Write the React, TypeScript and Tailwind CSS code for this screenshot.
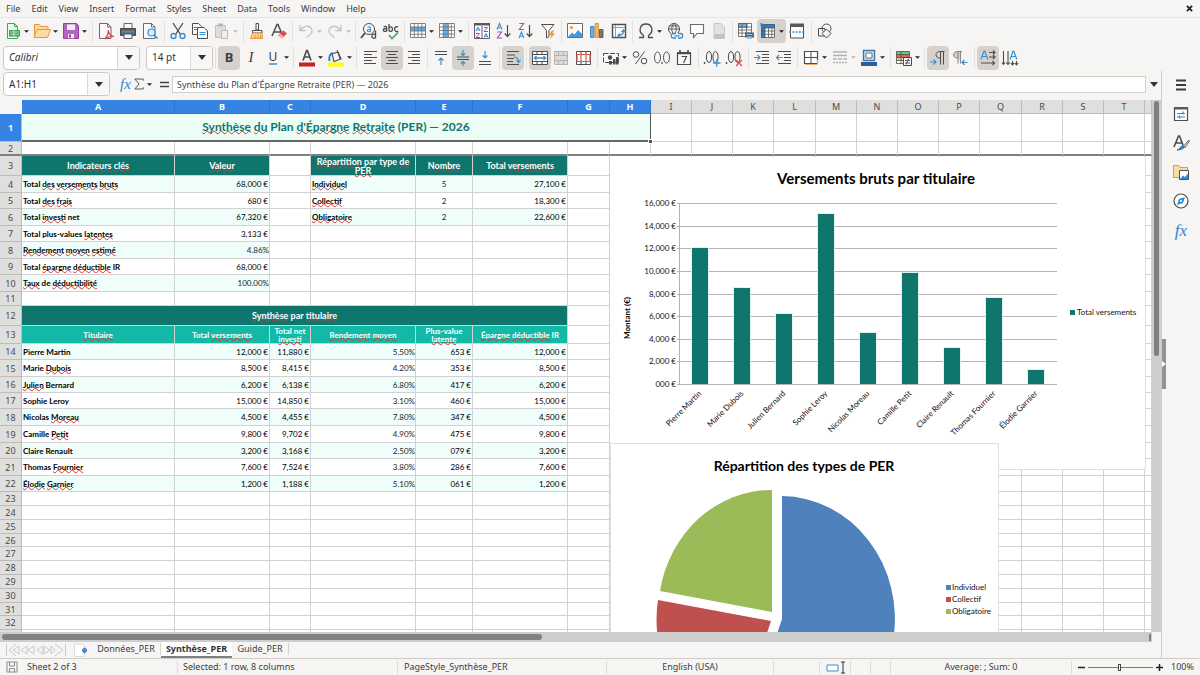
import React from 'react';

const GRAY = '#4d4d4d';
const BLUE = '#3a8fd0';

const icons: Record<string, React.ReactNode> = {
    newDoc: (
        <>
            <path d="M3.500 1.500h7l3 3v12h-10z" fill="#e9f7ec" stroke="#3fa456" />
            <path d="M10.500 1.500v3h3" fill="none" stroke="#3fa456" />
            <path d="M5 8h11v6.500H5z" fill="#3fa456" />
            <path d="M6 10h9M6 12.300h9M10 8v6" stroke="#d5f0db" strokeWidth=".8" />
        </>
    ),
    open: (
        <>
            <path d="M1.500 14V2.500h5l1.500 2h7v3" fill="#fbd79b" stroke="#e8983a" />
            <path d="M1 15.500l3-8h13.500l-3 8z" fill="#fddca4" stroke="#e8983a" />
        </>
    ),
    save: (
        <>
            <path d="M1.500 1.500h13l2 2v13h-15z" fill="#b366c6" stroke="#93409f" />
            <path d="M4.500 2h9v6.500h-9zM5.500 11.500h7v5h-7z" fill="#f6eaf8" stroke="#93409f" strokeWidth=".6" />
            <path d="M7 12.500h2v3H7z" fill="#93409f" />
        </>
    ),
    pdf: (
        <>
            <path d="M2.500 1.500h8l3.500 3.500v11.500h-11.500z" fill="#fafafa" stroke="#6b6b6b" />
            <path d="M10.500 1.500v3.500h3.500" fill="none" stroke="#6b6b6b" />
            <path d="M8 17c2.500-3 3.500-6 3.200-9 .3 3 2.300 6 5.800 6.500-3-.4-6 .4-9 2.500z" fill="none" stroke="#e0404a" strokeWidth="1.200" />
        </>
    ),
    print: (
        <>
            <path d="M5 1.500h8V7H5z" fill="#f8f8f8" stroke="#666" />
            <path d="M1.500 6.500h15v7h-15z" fill="#5d6266" stroke="#44484b" />
            <path d="M2.500 9h13v1.500h-13z" fill="#3f8fcf" />
            <path d="M5 12h8v4.500H5z" fill="#f4f4f4" stroke="#555" />
        </>
    ),
    preview: (
        <>
            <path d="M2.500 1.500h8l3.500 3.500v11.500H2.500z" fill="#fafafa" stroke="#6b6b6b" />
            <path d="M10.500 1.500v3.500h3.500" fill="none" stroke="#6b6b6b" />
            <circle cx="10.500" cy="10.500" r="3.500" fill="#dcecf8" stroke={BLUE} strokeWidth="1.200" />
            <path d="M13 13l3.500 3.500" stroke={BLUE} strokeWidth="1.600" />
        </>
    ),
    cut: (
        <>
            <path d="M4 1l7.500 11.500M14 1L6.500 12.500" stroke={GRAY} strokeWidth="1.300" />
            <circle cx="4.500" cy="14" r="2.500" fill="none" stroke={BLUE} strokeWidth="1.400" />
            <circle cx="13.500" cy="14" r="2.500" fill="none" stroke={BLUE} strokeWidth="1.400" />
        </>
    ),
    copy: (
        <>
            <path d="M1.500 1.500h6l3 3v8h-9z" fill="#fafafa" stroke={GRAY} />
            <path d="M6.500 5.500h6.500l3.500 3.500v7.500h-10z" fill="#fafafa" stroke={GRAY} />
            <path d="M3 5.500h3M3 7.500h3M8.500 10.500h6M8.500 12.500h6" stroke={BLUE} />
        </>
    ),
    paste: (
        <>
            <path d="M2.500 3.500h10v12h-10z" fill="#dedddc" stroke="#c4c3c1" />
            <path d="M5 1.500h5v3H5z" fill="#b7b6b4" />
            <path d="M8.500 8.500h6v8h-6z" fill="#f0efee" stroke="#bdbcba" />
        </>
    ),
    brush: (
        <>
            <path d="M8 1.500h2.500V8H8z" fill="none" stroke={GRAY} />
            <path d="M4.500 8.500h9.500v2.500H4.500z" fill="#fafafa" stroke={GRAY} />
            <path d="M4.500 11h9.500l.5 5.500h-12z" fill="#fbd08c" stroke="#e8983a" />
            <path d="M7 16v-3M10 16v-3M12.500 16v-3" stroke="#e8983a" />
        </>
    ),
    clear: (
        <>
            <path d="M2 14L7 2.500h1L12 12M4 10h6.500" fill="none" stroke={GRAY} strokeWidth="1.500" />
            <path d="M8 13l5.500-4.500 3.500 3L12 16.500z" fill="#e5484d" />
            <path d="M8 13l2-1.600 3.700 3.200L12 16.500z" fill="#f7a9ab" />
        </>
    ),
    undo: <path d="M3 3v5.500h5.500M3.500 8c3-4 8-5 10.500-2s1 6-4.500 9.500" fill="none" stroke="#c3c2c0" strokeWidth="1.300" />,
    redo: <path d="M15 3v5.500H9.500M14.500 8c-3-4-8-5-10.500-2s-1 6 4.500 9.500" fill="none" stroke="#c3c2c0" strokeWidth="1.300" />,
    find: (
        <>
            <circle cx="9" cy="7" r="5.500" fill="#f2f8fc" stroke={GRAY} />
            <path d="M5 11l-4 5" stroke={GRAY} strokeWidth="2" />
            <path d="M7.500 5.500c1-1 3-1 3 .7v3c-1.500 1-3.200.5-3.200-.6S9 7.300 10.500 7.300" fill="none" stroke={BLUE} strokeWidth="1.100" />
            <path d="M15.500 8.500v8M15.500 13c-.8-1.400-3.800-1.200-3.800 1.200s3 2.600 3.800 1" fill="none" stroke={GRAY} strokeWidth="1.300" />
        </>
    ),
    spell: (
        <>
            <path d="M1.700 5c1-1 3-.8 3 .6v3.400c-1.300.8-3.400.6-3.400-.9s2-1.600 3.400-1.600M7 2v7M7 5.700c.8-1.200 3.500-1.200 3.500 1.500S7.800 9.600 7 8.500M16.200 5c-1.600-1-3.600-.2-3.600 2.100s2 3 3.600 2" fill="none" stroke={GRAY} strokeWidth="1.300" />
            <path d="M7 13l3 3.500L16 10.500" fill="none" stroke="#3cae5c" strokeWidth="1.600" />
        </>
    ),
    rowIcon: (
        <>
            <path d="M1.500 1.500h15v14h-15z" fill="#fff" />
            <path d="M1 5h16v4H1z" fill="#63b0ec" />
            <path d="M1.500 1.500h15v14h-15zM1.500 5h15M1.500 9h15M1.500 12.300h15M5.300 1.500v14M9 1.500v14M12.800 1.500v14" fill="none" stroke="#6a6a6a" strokeWidth=".8" />
        </>
    ),
    colIcon: (
        <>
            <path d="M1.500 1.500h15v14h-15z" fill="#fff" />
            <path d="M5.300 1h5v15h-5z" fill="#63b0ec" />
            <path d="M1.500 1.500h15v14h-15zM1.500 5h15M1.500 8.500h15M1.500 12h15M5.300 1.500v14M10.300 1.500v14M13.300 1.500v14" fill="none" stroke="#6a6a6a" strokeWidth=".8" />
        </>
    ),
    sortDialog: (
        <>
            <path d="M1.500 2.500h15v14h-15z" fill="#fff" stroke="#6a5670" />
            <path d="M1 1h16v2.500H1z" fill="#5a5a5a" />
            <path d="M9 4v12.500" stroke="#6a5670" />
            <path d="M3 9l2-4 2 4M11 15.500l2-4 2 4M3.500 7.800h3M11.500 14.300h3" fill="none" stroke={BLUE} />
            <path d="M3 11.500h3.500l-3.500 4h4M11 5.500h3.500l-3.500 4h4" fill="none" stroke="#a64fb8" />
        </>
    ),
    sortAsc: (
        <>
            <path d="M2 7.500l2.500-6 2.500 6M2.800 5.700h3.400" fill="none" stroke={BLUE} strokeWidth="1.100" />
            <path d="M2.300 10h4.400l-4.400 6h4.700" fill="none" stroke="#a64fb8" strokeWidth="1.100" />
            <path d="M12.500 3v11.500M9.700 11.500l2.800 3 2.800-3" fill="none" stroke={GRAY} strokeWidth="1.200" />
        </>
    ),
    sortDesc: (
        <>
            <path d="M2.300 1.500h4.400l-4.400 6h4.700" fill="none" stroke="#a64fb8" strokeWidth="1.100" />
            <path d="M2 16l2.500-6 2.500 6M2.800 14.200h3.400" fill="none" stroke={BLUE} strokeWidth="1.100" />
            <path d="M12.500 3v11.500M9.700 11.500l2.800 3 2.800-3" fill="none" stroke={GRAY} strokeWidth="1.200" />
        </>
    ),
    filter: (
        <>
            <path d="M2.500 2.500h12.500l-5 6v6l-2.500 1.500v-7.500z" fill="#fafafa" stroke={GRAY} />
            <path d="M13 8.500l-3 4.500h2.500l-1.500 4 5-5.500h-2.500l1.500-3z" fill="#f0962e" />
        </>
    ),
    image: (
        <>
            <path d="M1.500 1.500h15v14h-15z" fill="#fafafa" stroke="#6b6b6b" />
            <path d="M2 15l4-4.500 2.500 2L12 8l4 4v3z" fill="#3f9ae0" />
            <circle cx="5.500" cy="5.500" r="1.600" fill="#f0a030" />
        </>
    ),
    chart: (
        <>
            <path d="M2.500 4.500h3.500v11H2.500z" fill="#63b0ec" stroke="#2b7cc0" strokeWidth=".8" />
            <path d="M7 1.500h3.500v14H7z" fill="#f8b55c" stroke="#de861f" strokeWidth=".8" />
            <path d="M11.500 7.500h3.500v8h-3.500z" fill="#777" stroke="#4d4d4d" strokeWidth=".8" />
        </>
    ),
    pivot: (
        <>
            <path d="M2.500 2.500h13v13h-13z" fill="#fff" stroke={GRAY} strokeWidth="1.400" />
            <path d="M3 5.500h12M5.500 3v12" stroke="#9a9a9a" />
            <path d="M8.500 13.500c4 0 5-2 5-5M11.500 10l2-2 2 2M10 11.500l-2 2 2 2" fill="none" stroke={BLUE} strokeWidth="1.300" />
        </>
    ),
    omega: <path d="M2 15.500h4.500v-2C1 10 2.500 2 9 2s8 8 2.500 11.500v2H16" fill="none" stroke={GRAY} strokeWidth="1.300" />,
    link: (
        <>
            <circle cx="8" cy="7" r="5.500" fill="none" stroke={GRAY} />
            <path d="M2.500 7h11M3.500 4h9M8 1.500c-3 3-3 8 0 11M8 1.500c3 3 3 8 0 11" fill="none" stroke={GRAY} strokeWidth=".9" />
            <path d="M5 11h12v6H5z" fill="#f6f5f4" />
            <path d="M10 11.500H7.500c-3 0-3 4.500 0 4.500H10M12 11.500h2.500c3 0 3 4.500 0 4.500H12M8.500 13.800h5" fill="none" stroke={BLUE} strokeWidth="1.300" />
        </>
    ),
    comment: <path d="M2.500 2.500h13v9h-6.500l-3.500 4v-4h-3z" fill="#fff" stroke="#6b6b6b" strokeWidth="1.100" />,
    headers: (
        <>
            <path d="M4 1.500h7l3.500 3.500v11.500H4z" fill="#e2e2e2" stroke="#c6c6c6" />
            <path d="M4.500 12h9.500v4H4.500z" fill="#c2c2c6" />
        </>
    ),
    printArea: (
        <>
            <path d="M1.500 1.500h13v13h-13z" fill="#fff" />
            <path d="M1 1h10v5H1z" fill="#63b0ec" />
            <path d="M1.500 1.500h13v13h-13zM1.500 5h13M1.500 8h13M1.500 11h13M5 1.500v13M9.500 1.500v13" fill="none" stroke="#565656" strokeWidth=".8" />
            <path d="M8 10.500h9v5H8z" fill="#5d6266" />
            <path d="M9.500 12h6v1H9.500zM10 14.500h5V17h-5z" fill="#8fc2ea" />
        </>
    ),
    freeze: (
        <>
            <path d="M2.500 2.500h13v13h-13z" fill="#fff" />
            <path d="M2 2h14v4H2zM2 2h4v14H2z" fill="#2f7fc4" />
            <path d="M2.500 2.500h13v13h-13zM6 2.500v13M9.500 6v10M12.800 6v10M2.500 6h13M2.500 9h13M2.500 12.300h13" fill="none" stroke="#565656" strokeWidth=".8" />
            <path d="M3 1v5M.8 3h5M1.500 1.200l3.500 3.500" stroke="#2d84cc" />
        </>
    ),
    split: (
        <>
            <path d="M2.500 2.500h13v13.500h-13z" fill="#fff" stroke={GRAY} />
            <path d="M2 1.500h14v3.500H2z" fill="#5a5a5a" />
            <path d="M1 10h16" stroke={BLUE} strokeWidth="1.300" strokeDasharray="2 1.300" />
        </>
    ),
    shapes: (
        <>
            <circle cx="10.500" cy="6.500" r="4.500" fill="none" stroke={GRAY} />
            <path d="M2.500 6.500h6.500v7.500H2.500z" fill="none" stroke={GRAY} />
            <path d="M10.500 7l4.500 4.500-4.500 4.500L6 11.500z" fill="#f6f5f4" stroke={GRAY} />
        </>
    ),
    fontColor: (
        <>
            <path d="M5 11.500l3.600-10h.8l3.600 10M6.200 8h5.600" fill="none" stroke={GRAY} strokeWidth="1.700" />
            <path d="M1 13.500h16v4H1z" fill="#c9211e" />
        </>
    ),
    highlight: (
        <>
            <path d="M5 5l6-2 3 7-7 2.500z" fill="#fafafa" stroke={GRAY} strokeWidth="1.200" />
            <path d="M10 1l3 9" stroke={GRAY} />
            <path d="M6 4c-4 1-4 4-3.500 8" fill="none" stroke="#2f7fc4" strokeWidth="2" />
            <path d="M1 13.500h16v4H1z" fill="#ffff00" />
        </>
    ),
    alignLeft: <path d="M3 2.500h13M3 5.500h8M3 8.500h13M3 11.500h8M3 14.500h12" stroke={GRAY} strokeWidth="1.100" />,
    alignCenter: <path d="M3 2.500h12M5 5.500h8M3 8.500h12M5 11.500h8M3 14.500h12" stroke={GRAY} strokeWidth="1.100" />,
    alignRight: <path d="M3 2.500h12M7 5.500h8M3 8.500h12M7 11.500h8M3 14.500h12" stroke={GRAY} strokeWidth="1.100" />,
    vTop: (
        <>
            <path d="M3 2.500h12M3 5.500h12" stroke={GRAY} strokeWidth="1.100" />
            <path d="M9 16V9M6.500 11.500L9 9l2.500 2.500" fill="none" stroke={BLUE} strokeWidth="1.200" />
        </>
    ),
    vMiddle: (
        <>
            <path d="M3 8h12M3 10.500h12" stroke={GRAY} strokeWidth="1.100" />
            <path d="M9 1v5.500M6.800 4.500L9 6.500l2.200-2M9 17v-4.500M6.800 14.500L9 12.500l2.200 2" fill="none" stroke={BLUE} strokeWidth="1.200" />
        </>
    ),
    vBottom: (
        <>
            <path d="M3 12.500h12M3 15.500h12" stroke={GRAY} strokeWidth="1.100" />
            <path d="M9 2v7M6.500 6.500L9 9l2.500-2.500" fill="none" stroke={BLUE} strokeWidth="1.200" />
        </>
    ),
    wrap: (
        <>
            <path d="M3 2.500h12M3 6h8M3 9.500h7M3 12.500h6M3 15.500h12" stroke={GRAY} strokeWidth="1.100" />
            <path d="M10 8c3 0 4.500 2 4.500 5M12.500 11l2 2.500 2-2.500" fill="none" stroke={BLUE} strokeWidth="1.200" />
        </>
    ),
    merge: (
        <>
            <path d="M1.500 2.500h15v13h-15z" fill="#fff" stroke={GRAY} />
            <path d="M1.500 5.500h15M1.500 12.500h15M6 2.500v3M11 2.500v3M6 12.500v3M11 12.500v3" stroke={GRAY} />
            <path d="M3 9h12M5.500 7L3.500 9l2 2M12.500 7l2 2-2 2" fill="none" stroke={BLUE} strokeWidth="1.300" />
        </>
    ),
    mergeOff: <path d="M1.500 2.500h13v13h-13zM1.500 6.500h13M1.500 11.500h13M5.500 2.500v4M10.500 2.500v4M5.500 11.500v4M10.500 11.500v4" fill="#dcdbda" stroke="#b5b4b2" />,
    unmerge: (
        <>
            <path d="M1.500 2.500h14v13h-14zM1.500 5.500h14M1.500 12.500h14M6 2.500v13M11 2.500v13" fill="#fff" stroke={GRAY} />
            <path d="M2 5.500h13v7H2zM6 5.500v7M11 5.500v7" fill="#fff" stroke="#d9534f" strokeWidth="1.200" />
        </>
    ),
    currency: (
        <>
            <path d="M1.500 4.500h15v9h-15z" fill="#fafafa" stroke={GRAY} strokeDasharray="5 1.500" />
            <circle cx="8" cy="8.500" r="2.200" fill={GRAY} />
            <path d="M7 12h3v3.500H7zM11 10h2.500v5.500H11zM14 8h2.500v7.500H14z" fill={GRAY} />
        </>
    ),
    percent: (
        <>
            <circle cx="5" cy="5.500" r="2.800" fill="none" stroke={GRAY} />
            <circle cx="13" cy="12" r="2.800" fill="none" stroke={GRAY} />
            <path d="M13.500 2.500L4.500 15" stroke={GRAY} />
        </>
    ),
    number: (
        <>
            <ellipse cx="4.500" cy="8.500" rx="3" ry="5.500" fill="none" stroke={GRAY} />
            <ellipse cx="13.500" cy="8.500" rx="3" ry="5.500" fill="none" stroke={GRAY} />
            <path d="M9 13v2" stroke={GRAY} strokeWidth="1.200" />
        </>
    ),
    date: (
        <>
            <path d="M2.500 3.500h13v12h-13z" fill="#fafafa" stroke={GRAY} strokeWidth="1.200" />
            <path d="M5 1v4M13 1v4M2 4.500h14" stroke={GRAY} strokeWidth="1.600" />
            <path d="M6.500 7.500h5l-3 6.500" fill="none" stroke={GRAY} strokeWidth="1.200" />
        </>
    ),
    addDecimal: (
        <>
            <path d="M1.500 13v2" stroke={GRAY} strokeWidth="1.300" />
            <ellipse cx="6" cy="8" rx="2.600" ry="5.500" fill="none" stroke={GRAY} />
            <ellipse cx="12.500" cy="8" rx="2.600" ry="5.500" fill="none" stroke={GRAY} />
            <path d="M10 14h7.500M13.800 10.200v7.500" stroke={BLUE} strokeWidth="1.300" />
        </>
    ),
    delDecimal: (
        <>
            <path d="M1.500 13v2" stroke={GRAY} strokeWidth="1.300" />
            <ellipse cx="6" cy="8" rx="2.600" ry="5.500" fill="none" stroke={GRAY} />
            <ellipse cx="12.500" cy="8" rx="2.600" ry="5.500" fill="none" stroke={GRAY} />
            <path d="M11 11l6 6M17 11l-6 6" stroke="#e5484d" strokeWidth="1.300" />
        </>
    ),
    indent: (
        <>
            <path d="M3 2.500h13M9 5.500h7M9 8.500h7M9 11.500h7M3 14.500h13" stroke={GRAY} strokeWidth="1.100" />
            <path d="M1 8.500h6M4.500 6L7 8.500 4.500 11" fill="none" stroke={BLUE} strokeWidth="1.200" />
        </>
    ),
    outdent: (
        <>
            <path d="M3 2.500h13M9 5.500h7M9 8.500h7M9 11.500h7M3 14.500h13" stroke={GRAY} strokeWidth="1.100" />
            <path d="M7.500 8.500H1.500M4 6L1.500 8.500 4 11" fill="none" stroke={BLUE} strokeWidth="1.200" />
        </>
    ),
    borders: (
        <>
            <path d="M2.500 2.500h13v12h-13z" fill="#fff" stroke={GRAY} strokeWidth="1.200" />
            <path d="M9 2.500v12M2.500 8.500h13" stroke={GRAY} />
            <path d="M3 15.500h12.500M15.500 11v4" stroke="#f0a860" />
        </>
    ),
    lineStyle: <path d="M2 3h14M2 6.500h14M2 10h4M7 10h4M12 10h4M2 13.500h2M5 13.500h2M8 13.500h2M11 13.500h2M14 13.500h2" stroke="#b3b2b0" strokeWidth="1.600" />,
    borderColor: (
        <>
            <path d="M3.500 1.500h11v10h-11z" fill="#d8e8f6" stroke="#3a76a8" strokeWidth="1.400" />
            <path d="M6 4h6v5H6z" fill="#fff" stroke={GRAY} strokeWidth=".8" />
            <path d="M1 13h16v4H1z" fill="#2a6099" />
        </>
    ),
    conditional: (
        <>
            <path d="M1.500 2.500h13v12h-13z" fill="#fff" />
            <path d="M1.500 2.500h13v3h-13z" fill="#6cc382" />
            <path d="M1.500 5.500h13v3h-13z" fill="#e8604c" />
            <path d="M1.500 8.500h6v3h-6z" fill="#f8c46c" />
            <path d="M1.500 2.500h13v12h-13zM1.500 5.500h13M1.500 8.500h13M1.500 11.500h13M6 2.500v12" fill="none" stroke={GRAY} strokeWidth=".8" />
            <path d="M8.500 8.500h8v8h-8z" fill="#fafafa" stroke={GRAY} />
            <path d="M10 11.500h5M10 14h5M14 9.500l-3 6" stroke={GRAY} strokeWidth=".9" />
        </>
    ),
    ltr: (
        <>
            <path d="M14.500 15.500V2.500M11.500 15.500V2.500H15.500M11.500 2.500C5.500 2 5.500 9.500 11.500 9" fill="#d5d2cd" stroke={GRAY} />
            <path d="M1 13h6M4.500 10.500L7 13l-2.500 2.500" fill="none" stroke={BLUE} strokeWidth="1.200" />
        </>
    ),
    rtl: (
        <>
            <path d="M9.500 14.500V2.500M7 14.500V2.500H11M7 2.500C1 2 1 9.500 7 9" fill="#cfcecb" stroke="#8a8a8a" />
            <path d="M16.500 13.500h-5.500M13.500 11L11 13.500l2.500 2.500" fill="none" stroke={BLUE} strokeWidth="1.200" />
        </>
    ),
    textH: (
        <>
            <path d="M2 10.500L5 2h.8l3 8.500M3 7.500h5" fill="none" stroke={BLUE} strokeWidth="1.200" />
            <path d="M10 3.500h6M10 8h6M2 14h13.500M14 1.500l2 2-2 2M14 6l2 2-2 2M13.500 12l2 2-2 2" fill="none" stroke={GRAY} strokeWidth="1.100" />
        </>
    ),
    textV: (
        <>
            <path d="M9 10.500L12 2h.8l3 8.500M10 7.500h5" fill="none" stroke={BLUE} strokeWidth="1.200" />
            <path d="M2.500 2v13.500M7 2v13.500M11.500 12v4M15.500 12v4M.8 13.500l1.700 2 1.700-2M5.300 13.500l1.700 2 1.700-2M9.800 14l1.700 2 1.700-2M13.800 14l1.700 2 1.700-2" fill="none" stroke={GRAY} strokeWidth="1.100" />
        </>
    ),
    settings: <path d="M4 4.500h10M4 9h10M4 13.500h10" stroke="#3a3a3a" strokeWidth="2" />,
    properties: (
        <>
            <path d="M2.500 2.500h13v13h-13z" fill="#fff" stroke={GRAY} strokeWidth="1.200" />
            <path d="M2 2h14v2.500H2z" fill="#5a5a5a" />
            <path d="M5 8.500h8M5 12h8M11 6.500v3M7.500 10.500v3" stroke="#3388cc" strokeWidth="1.200" />
        </>
    ),
    stylesIcon: (
        <>
            <path d="M2 13L6.500 2h1L11 11M4 9h6" fill="none" stroke={GRAY} strokeWidth="1.600" />
            <path d="M17 6l-5.500 6 1.500 1.500 4-6z" fill="#fafafa" stroke={GRAY} strokeWidth=".9" />
            <path d="M5 16c3 0 3-4 6-4.500 2 1 2 4-6 4.500z" fill="#2d8fdc" stroke="#1f6fb4" />
        </>
    ),
    gallery: (
        <>
            <path d="M1.500 14.500v-12h5l1.500 2h7.500v10z" fill="#fddca4" stroke="#e8983a" />
            <path d="M7.500 7.500h9v9h-9z" fill="#fff" stroke={GRAY} />
            <path d="M8 16l3-3.500 2 1.500 3-3.500V16z" fill="#2d8fdc" />
        </>
    ),
    navigator: (
        <>
            <circle cx="9" cy="9" r="7" fill="#fff" stroke={GRAY} strokeWidth="1.200" />
            <path d="M13 5l-2 6-6 2 2-6z" fill="#2d8fdc" />
            <circle cx="9" cy="9" r="1" fill="#fff" />
        </>
    ),
};

const Icon: React.FC<{ name: string }> = ({ name }) => (
    <svg viewBox="0 0 18 18" className="size-[18px] shrink-0" aria-hidden="true">
        {icons[name]}
    </svg>
);

const Caret: React.FC<{ color?: string }> = ({ color = '#222' }) => (
    <svg viewBox="0 0 8 4" className="w-[5px] h-[3px] shrink-0" aria-hidden="true">
        <path d="M0 0h8L4 4z" fill={color} />
    </svg>
);

const WideCaret = () => (
    <svg viewBox="0 0 8 5" className="w-[8px] h-[5px] shrink-0" aria-hidden="true">
        <path d="M0 0h8L4 5z" fill="#333" />
    </svg>
);

interface ToolProps {
    label: string;
    icon?: string;
    menu?: boolean;
    on?: boolean;
    off?: boolean;
    children?: React.ReactNode;
}

const Tool: React.FC<ToolProps> = ({ label, icon, menu, on, off, children }) => (
    <button
        type="button"
        aria-label={label}
        disabled={off}
        className={`h-[24px] rounded-sm flex items-center shrink-0 ${menu ? 'w-[29px]' : 'w-[22px]'} ${on ? 'bg-[#d5d2cd]' : ''}`}
    >
        <span className="w-[22px] shrink-0 flex justify-center">{icon ? <Icon name={icon} /> : children}</span>
        {menu && <Caret color={off ? '#bbb' : '#222'} />}
    </button>
);

const Sep: React.FC<{ tight?: boolean }> = ({ tight }) => (
    <span className={`flex justify-center shrink-0 ${tight ? 'w-[5px]' : 'w-[6px]'}`}>
        <span className="w-px h-[22px] bg-[#e3e2e0]" />
    </span>
);

const Combo: React.FC<{ label: string; value: string; inputClass: string }> = ({ label, value, inputClass }) => (
    <div className="h-[24px] flex shrink-0 rounded border border-[#cdc7c2] overflow-hidden bg-white">
        <input aria-label={label} defaultValue={value} className={`px-[5px] text-[#2e3436] outline-none ${inputClass}`} />
        <button type="button" aria-label={`${label} list`} className="w-[22px] border-l border-[#dcd9d5] bg-[#f8f7f6] flex items-center justify-center">
            <WideCaret />
        </button>
    </div>
);

// Words between ~ marks get the red spell-check wave
const Spelled: React.FC<{ text: string }> = ({ text }) => (
    <>
        {text.split('~').map((part, i) =>
            i % 2 ? (
                <span key={i} className="underline decoration-wavy decoration-[#e0302a] decoration-1 underline-offset-[-1px] [text-decoration-skip-ink:none]">{part}</span>
            ) : (
                <React.Fragment key={i}>{part}</React.Fragment>
            )
        )}
    </>
);

const columns: [string, string][] = [
    ['A', 'w-[153px]'], ['B', 'w-[95px]'], ['C', 'w-[41px]'], ['D', 'w-[105px]'], ['E', 'w-[57px]'],
    ['F', 'w-[95px]'], ['G', 'w-[42px]'], ['H', 'w-[41px]'], ['I', 'w-[41px]'], ['J', 'w-[41px]'],
    ['K', 'w-[41px]'], ['L', 'w-[42px]'], ['M', 'w-[41px]'], ['N', 'w-[41px]'], ['O', 'w-[41px]'],
    ['P', 'w-[41px]'], ['Q', 'w-[42px]'], ['R', 'w-[41px]'], ['S', 'w-[41px]'], ['T', 'w-[41px]'], ['', ''],
];

type Kind = 'title' | 'head' | 'sub' | 'label' | 'money' | 'percent' | 'count';

interface CellData {
    text: string;
    kind: Kind;
    span?: number;
    tint?: boolean;
}

interface RowData {
    h: string;
    cells: (CellData | null)[];
}

const kindClass: Record<Kind, string> = {
    title: 'bg-[#ecfdf5] text-[#0f766e] font-bold text-[12px] text-center border-r-[#555] border-b-[#666]',
    head: 'bg-[#0f766e] text-white font-bold text-[9px] leading-[9px] text-center border-[#d0d0d0]',
    sub: 'bg-[#14b8a6] text-white font-bold text-[8px] leading-[8px] text-center border-[#8fdbd1]',
    label: 'text-black font-bold text-[8px] leading-[12px] pl-px',
    money: 'text-black text-[8px] leading-[12px] text-right pr-px',
    percent: 'text-[#222] text-[8px] leading-[12px] text-right',
    count: 'text-[#222] text-[8px] leading-[12px] text-center',
};

const cell = (kind: Kind, text: string, tint = false, span = 1): CellData => ({ kind, text, tint, span });

const summary = [
    ['Total ~des~ ~versements~ ~bruts~', '68,000 €'],
    ['Total ~des~ ~frais~', '680 €'],
    ['Total ~investi~ net', '67,320 €'],
    ['Total plus-values ~latentes~', '3,133 €'],
    ['~Rendement~ ~moyen~ ~estimé~', '4.86%'],
    ['Total ~épargne~ ~déductible~ IR', '68,000 €'],
    ['~Taux~ de ~déductibilité~', '100.00%'],
];

const types = [
    ['~Individuel~', '5', '27,100 €'],
    ['~Collectif~', '2', '18,300 €'],
    ['~Obligatoire~', '2', '22,600 €'],
];

const holders = [
    ['Pierre Martin', '12,000 €', '11,880 €', '5.50%', '653 €', '12,000 €'],
    ['Marie ~Dubois~', '8,500 €', '8,415 €', '4.20%', '353 €', '8,500 €'],
    ['~Julien~ Bernard', '6,200 €', '6,138 €', '6.80%', '417 €', '6,200 €'],
    ['Sophie Leroy', '15,000 €', '14,850 €', '3.10%', '460 €', '15,000 €'],
    ['Nicolas ~Moreau~', '4,500 €', '4,455 €', '7.80%', '347 €', '4,500 €'],
    ['Camille ~Petit~', '9,800 €', '9,702 €', '4.90%', '475 €', '9,800 €'],
    ['Claire Renault', '3,200 €', '3,168 €', '2.50%', '079 €', '3,200 €'],
    ['Thomas ~Fournier~', '7,600 €', '7,524 €', '3.80%', '286 €', '7,600 €'],
    ['~Élodie~ ~Garnier~', '1,200 €', '1,188 €', '5.10%', '061 €', '1,200 €'],
];

const kindOf = (value: string): Kind => (value.endsWith('%') ? 'percent' : 'money');

const summaryHeights = ['h-[17px]', 'h-[16px]', 'h-[17px]', 'h-[16px]', 'h-[17px]', 'h-[16px]', 'h-[17px]'];
const holderHeights = ['h-[16px]', 'h-[17px]', 'h-[16px]', 'h-[16px]', 'h-[17px]', 'h-[17px]', 'h-[16px]', 'h-[17px]', 'h-[16px]'];
const emptyHeights = ['h-[14px]', 'h-[14px]', 'h-[14px]', 'h-[13px]', 'h-[14px]', 'h-[14px]', 'h-[14px]', 'h-[14px]', 'h-[13px]', 'h-[14px]', 'h-[14px]'];

const rows: RowData[] = [
    { h: 'h-[28px]', cells: [cell('title', "~Synthèse~ ~du~ Plan ~d'Épargne~ ~Retraite~ (PER) — 2026", false, 8)] },
    { h: 'h-[14px]', cells: [] },
    {
        h: 'h-[20px]',
        cells: [
            cell('head', '~Indicateurs~ ~clés~'), cell('head', '~Valeur~'), null,
            cell('head', '~Répartition~ par type ~de~ ~PER~'), cell('head', '~Nombre~'), cell('head', 'Total ~versements~'),
        ],
    },
    ...summary.map(([label, value], i) => {
        const tint = i % 2 === 0;
        const t = types[i];
        return {
            h: summaryHeights[i],
            cells: [
                cell('label', label, tint), cell(kindOf(value), value, tint), null,
                ...(t ? [cell('label', t[0], tint), cell('count', t[1], tint), cell('money', t[2], tint)] : []),
            ],
        };
    }),
    { h: 'h-[14px]', cells: [] },
    { h: 'h-[20px]', cells: [cell('head', '~Synthèse~ par ~titulaire~', false, 6)] },
    {
        h: 'h-[18px]',
        cells: [
            cell('sub', '~Titulaire~'), cell('sub', 'Total ~versements~'), cell('sub', 'Total net ~investi~'),
            cell('sub', '~Rendement~ ~moyen~'), cell('sub', 'Plus-value ~latente~'), cell('sub', '~Épargne~ ~déductible~ IR'),
        ],
    },
    ...holders.map((h, i) => ({
        h: holderHeights[i],
        cells: h.map((v, c) => cell(c === 0 ? 'label' : kindOf(v), v, i % 2 === 0)),
    })),
    ...emptyHeights.map(h => ({ h, cells: [] })),
];

const SheetRow: React.FC<{ row: RowData; index: number }> = ({ row, index }) => {
    const used = row.cells.reduce((n, c) => n + (c?.span ?? 1), 0);
    const all = [...row.cells, ...Array(columns.length - used).fill(null)] as (CellData | null)[];
    const bottom = index === 1 ? 'border-b-2 border-b-[#7f8080]' : 'border-b';
    return (
        <tr className={row.h}>
            <th
                scope="row"
                className={`p-0 text-[9px] leading-[11px] border-r border-[#bdbcba] ${index === 0 ? 'bg-[#3584e4] text-white font-bold' : 'bg-[#dfdfde] text-[#4a4a4a] font-normal'} ${bottom}`}
            >
                {index + 1}
            </th>
            {all.map((c, i) => (
                <td
                    key={i}
                    colSpan={c?.span ?? 1}
                    className={`p-0 border-r border-[#d2d2d2] whitespace-nowrap ${c?.kind === 'title' ? 'border-b-2' : bottom} ${c ? kindClass[c.kind] : ''} ${c?.tint ? 'bg-[#effefa]' : ''}`}
                >
                    {c && (c.kind === 'head' || c.kind === 'sub' ? (
                        <span className={`flex items-center justify-center whitespace-normal ${c.kind === 'head' ? 'h-[19px]' : 'h-[17px]'}`}>
                            <span><Spelled text={c.text} /></span>
                        </span>
                    ) : (
                        <Spelled text={c.text} />
                    ))}
                </td>
            ))}
        </tr>
    );
};

const bars: [string, number][] = [
    ['Pierre Martin', 12000], ['Marie Dubois', 8500], ['Julien Bernard', 6200], ['Sophie Leroy', 15000], ['Nicolas Moreau', 4500],
    ['Camille Petit', 9800], ['Claire Renault', 3200], ['Thomas Fournier', 7600], ['Élodie Garnier', 1200],
];

const ticks = [0, 2000, 4000, 6000, 8000, 10000, 12000, 14000, 16000];

const BarChart = () => {
    const y = (v: number) => Math.round(227 - (v / 16000) * 181);
    return (
        <svg width="535" height="312" className="font-[Lato,sans-serif]" role="img" aria-label="Versements bruts par titulaire">
            <text x="266" y="27" textAnchor="middle" className="text-[15px] font-bold">Versements bruts par titulaire</text>
            {ticks.map(t => (
                <React.Fragment key={t}>
                    <path d={`M67 ${y(t)}.5H447`} stroke="#b3b3b3" />
                    <text x="66" y={y(t) + 3} textAnchor="end" className="text-[8px]" fill="#111">
                        {t === 0 ? '000 €' : `${t / 1000},000 €`}
                    </text>
                </React.Fragment>
            ))}
            <path d="M69.500 46v181" stroke="#b3b3b3" />
            {bars.map(([name, v], i) => {
                const x = 82 + Math.round(i * 41.95);
                return (
                    <React.Fragment key={name}>
                        <rect x={x - 1} y={y(v) - 1} width="18" height={228 - y(v)} fill="#e3f1ef" />
                        <rect x={x} y={y(v)} width="16" height={227 - y(v)} fill="#0f766e" />
                        <text transform={`translate(${x + 10} 237) rotate(-45)`} textAnchor="end" className="text-[8px]" fill="#111">{name}</text>
                    </React.Fragment>
                );
            })}
            <text transform="translate(20 161) rotate(-90)" textAnchor="middle" className="text-[8px] font-bold">Montant (€)</text>
            <rect x="460" y="153" width="5" height="5" fill="#0f766e" />
            <text x="467" y="158" className="text-[8px]" fill="#111">Total versements</text>
        </svg>
    );
};

const pieLegend = [
    ['Individuel', '#4f81bd'],
    ['Collectif', '#c0504d'],
    ['Obligatoire', '#9bbb59'],
];

const PieChart = () => (
    <svg width="387" height="312" className="font-[Lato,sans-serif]" role="img" aria-label="Répartition des types de PER">
        <text x="193" y="27" textAnchor="middle" className="text-[14px] font-bold">Répartition des types de PER</text>
        <path d="M171 175V52A114 123 0 1 1 132 291z" fill="#4f81bd" />
        <path d="M160 177L122 291A113 122 0 0 1 47 156z" fill="#c0504d" />
        <path d="M161 168L49 147A113 122 0 0 1 161 46z" fill="#9bbb59" />
        {pieLegend.map(([name, color], i) => (
            <React.Fragment key={name}>
                <rect x="335" y={141 + i * 12} width="5" height="5" fill={color} />
                <text x="341" y={146 + i * 12} className="text-[8px]" fill="#111">{name}</text>
            </React.Fragment>
        ))}
    </svg>
);

const Sheet = () => (
    <div className="relative flex-1 min-w-0 overflow-hidden bg-white">
        <table className="w-full table-fixed border-separate border-spacing-0 font-[Lato,sans-serif]">
            <colgroup>
                <col className="w-[22px]" />
                {columns.map(([, w], i) => <col key={i} className={w} />)}
            </colgroup>
            <thead>
                <tr className="h-[14px] text-[9px] leading-[12px] font-['Noto_Sans',sans-serif]">
                    <td className="p-0 bg-[#f6f5f4]" />
                    {columns.map(([name], i) => (
                        <th
                            key={i}
                            scope="col"
                            className={`p-0 border-r border-b ${i < 8 ? 'bg-[#3584e4] text-white font-bold border-[#2f74c8]' : 'bg-[#dfdfde] text-[#4a4a4a] font-normal border-[#bdbcba]'}`}
                        >
                            {name}
                        </th>
                    ))}
                </tr>
            </thead>
            <tbody className="[&_th]:font-['Noto_Sans',sans-serif]">
                {rows.map((row, i) => <SheetRow key={i} row={row} index={i} />)}
            </tbody>
        </table>
        <div className="absolute left-[648px] top-[39px] size-[3px] bg-[#555] border border-white box-content" />
        <div className="absolute left-[610px] top-[57px] bg-white border-r border-b border-[#e0e0e0]"><BarChart /></div>
        <div className="absolute left-[610px] top-[343px] bg-white border border-[#e0e0e0]"><PieChart /></div>
    </div>
);

const menus = ['File', 'Edit', 'View', 'Insert', 'Format', 'Styles', 'Sheet', 'Data', 'Tools', 'Window', 'Help'];

const MenuBar = () => (
    <nav className="h-[17px] flex items-center gap-px pl-px">
        {menus.map(m => (
            <button key={m} type="button" className="px-[5px] h-[17px] shrink-0">{m}</button>
        ))}
        <button type="button" aria-label="Close document" className="ml-auto mr-[7px]">
            <svg viewBox="0 0 8 8" className="size-[7px]"><path d="M1 1l6 6M7 1L1 7" stroke="#222" strokeWidth="2" /></svg>
        </button>
    </nav>
);

const StandardBar = () => (
    <div className="h-[27px] flex items-center pl-[2px] border-t border-[#e6e5e3]">
        <Tool label="New" icon="newDoc" menu />
        <Tool label="Open" icon="open" menu />
        <Tool label="Save" icon="save" menu />
        <Sep />
        <Tool label="Export as PDF" icon="pdf" />
        <Tool label="Print" icon="print" />
        <Tool label="Print preview" icon="preview" />
        <Sep />
        <Tool label="Cut" icon="cut" />
        <Tool label="Copy" icon="copy" />
        <Tool label="Paste" icon="paste" menu off />
        <Sep />
        <Tool label="Clone formatting" icon="brush" />
        <Tool label="Clear formatting" icon="clear" />
        <Sep tight />
        <Tool label="Undo" icon="undo" menu off />
        <Tool label="Redo" icon="redo" menu off />
        <Sep tight />
        <Tool label="Find and replace" icon="find" />
        <Tool label="Spelling" icon="spell" />
        <Sep tight />
        <Tool label="Row" icon="rowIcon" menu />
        <Tool label="Column" icon="colIcon" menu />
        <Sep />
        <Tool label="Sort" icon="sortDialog" />
        <Tool label="Sort ascending" icon="sortAsc" />
        <Tool label="Sort descending" icon="sortDesc" />
        <Tool label="AutoFilter" icon="filter" />
        <Sep tight />
        <Tool label="Insert image" icon="image" />
        <Tool label="Insert chart" icon="chart" />
        <Tool label="Pivot table" icon="pivot" />
        <Sep tight />
        <Tool label="Special character" icon="omega" menu />
        <Tool label="Hyperlink" icon="link" />
        <Tool label="Comment" icon="comment" />
        <Tool label="Headers and footers" icon="headers" off />
        <Sep tight />
        <Tool label="Define print area" icon="printArea" />
        <Tool label="Freeze rows and columns" icon="freeze" menu on />
        <Tool label="Split window" icon="split" />
        <Sep />
        <Tool label="Show draw functions" icon="shapes" />
    </div>
);

const FormatBar = () => (
    <div className="h-[27px] flex items-center pl-[3px]">
        <Combo label="Font name" value="Calibri" inputClass="w-[113px] italic text-[10px]" />
        <span className="w-[6px]" />
        <Combo label="Font size" value="14 pt" inputClass="w-[43px] text-[10px]" />
        <Sep tight />
        <Tool label="Bold" on><span className="text-[13px] font-bold leading-none">B</span></Tool>
        <Tool label="Italic"><span className="font-['Liberation_Serif',serif] text-[15px] italic leading-none">I</span></Tool>
        <Tool label="Underline" menu>
            <span className="text-[12px] leading-[13px] border-b-2 border-[#6aa9dc]">U</span>
        </Tool>
        <Sep tight />
        <Tool label="Font color" icon="fontColor" menu />
        <Tool label="Background color" icon="highlight" menu />
        <Sep tight />
        <Tool label="Align left" icon="alignLeft" />
        <Tool label="Center horizontally" icon="alignCenter" on />
        <Tool label="Align right" icon="alignRight" />
        <Sep tight />
        <Tool label="Align top" icon="vTop" />
        <Tool label="Center vertically" icon="vMiddle" on />
        <Tool label="Align bottom" icon="vBottom" />
        <Sep />
        <Tool label="Wrap text" icon="wrap" on />
        <Sep tight />
        <Tool label="Merge and center" icon="merge" on />
        <Tool label="Merge cells" icon="mergeOff" off />
        <Tool label="Unmerge cells" icon="unmerge" />
        <Sep tight />
        <Tool label="Currency" icon="currency" menu />
        <Tool label="Percent" icon="percent" />
        <Tool label="Number" icon="number" />
        <Tool label="Date" icon="date" />
        <Sep />
        <Tool label="Add decimal place" icon="addDecimal" />
        <Tool label="Delete decimal place" icon="delDecimal" />
        <Sep />
        <Tool label="Increase indent" icon="indent" />
        <Tool label="Decrease indent" icon="outdent" />
        <Sep tight />
        <Tool label="Borders" icon="borders" menu />
        <Tool label="Border style" icon="lineStyle" menu off />
        <Tool label="Border color" icon="borderColor" menu />
        <Sep />
        <Tool label="Conditional formatting" icon="conditional" menu />
        <Sep tight />
        <Tool label="Left to right" icon="ltr" on />
        <Tool label="Right to left" icon="rtl" />
        <Sep />
        <Tool label="Text direction horizontal" icon="textH" on />
        <Tool label="Text direction vertical" icon="textV" />
    </div>
);

const FormulaBar = () => (
    <div className="h-[29px] flex items-center pl-[3px] pb-[3px]">
        <Combo label="Name box" value="A1:H1" inputClass="w-[83px] text-[10px]" />
        <span className="w-[8px]" />
        <button type="button" aria-label="Function wizard" className="w-[15px] font-['Liberation_Serif',serif] italic text-[15px] leading-none text-[#2d84cc]">fx</button>
        <button type="button" aria-label="Select function" className="w-[25px] flex items-center gap-[3px]">
            <svg viewBox="0 0 12 14" className="w-[10px] h-[12px] ml-px"><path d="M11 3V1H1l5 6-5 6h10v-2" fill="none" stroke="#555" strokeWidth="1.200" /></svg>
            <Caret />
        </button>
        <button type="button" aria-label="Formula" className="w-[13px] flex justify-center">
            <svg viewBox="0 0 9 7" className="w-[9px] h-[7px]"><path d="M0 1.500h9M0 5.500h9" stroke="#444" strokeWidth="1.400" /></svg>
        </button>
        <input
            aria-label="Input line"
            defaultValue="Synthèse du Plan d'Épargne Retraite (PER) — 2026"
            className="flex-1 min-w-0 ml-px h-[17px] px-[4px] bg-white border border-[#d5d2ce] text-[9px] text-[#444] outline-none"
        />
        <button type="button" aria-label="Expand formula bar" className="w-[15px] flex justify-center"><WideCaret /></button>
    </div>
);

const tabs = ['Données_PER', 'Synthèse_PER', 'Guide_PER'];

const TabBar = () => (
    <div className="h-[16px] flex items-stretch text-[9px] leading-[14px]">
        <svg viewBox="0 0 62 14" className="w-[62px] h-[14px] ml-[5px] mt-px shrink-0" fill="none" stroke="#cbcac8">
            <path d="M1.500 1v12M11 1L4 7l7 6M8 7l6-4v8zM16 7l6-4v8zM23 7l6-4v8zM38 3l-6 4 6 4zM39 3l6 4-6 4zM46 3l4 4-4 4zM50 1l8 6-8 6M60.500 1v12" />
        </svg>
        <button type="button" aria-label="Add sheet" className="w-[16px] ml-[5px] flex justify-center items-center">
            <svg viewBox="0 0 16 14" className="w-[16px] h-[14px]">
                <path d="M2.500 1h8l2 2v10.500h-10z" fill="#fff" stroke="#dddcda" />
                <circle cx="12.500" cy="7.500" r="1.800" fill="none" stroke="#2f6fbd" strokeWidth="1.300" />
                <path d="M12.500 4.500v6M10 7.500h5" stroke="#2f6fbd" strokeWidth=".6" />
            </svg>
        </button>
        <span className="w-[4px]" />
        {tabs.map((t, i) => (
            <button
                key={t}
                type="button"
                className={i === 1
                    ? 'w-[71px] text-center bg-white font-bold text-[#333] border-b-2 border-[#7f8080]'
                    : `text-center border-r border-[#d3d2d0] mt-px mb-[3px] leading-[12px] ${i === 0 ? 'w-[69px]' : 'w-[57px]'}`}
            >
                {t}
            </button>
        ))}
    </div>
);

const SideBar = () => (
    <aside className="relative w-[39px] shrink-0 border-l border-[#cfcdca] flex flex-col items-center">
        <div className="h-[28px] flex items-center"><Tool label="Sidebar settings" icon="settings" /></div>
        <div className="flex flex-col items-center gap-[5px] mt-[3px]">
            <Tool label="Properties" icon="properties" />
            <Tool label="Styles" icon="stylesIcon" />
            <Tool label="Gallery" icon="gallery" />
            <Tool label="Navigator" icon="navigator" />
            <Tool label="Functions">
                <span className="font-['Liberation_Serif',serif] italic text-[17px] leading-none text-[#2d84cc]">fx</span>
            </Tool>
        </div>
        <button type="button" aria-label="Hide sidebar" className="absolute left-0 top-[268px] w-[4px] h-[50px] bg-[#929292] flex items-center">
            <svg viewBox="0 0 4 6" className="w-[4px] h-[6px]"><path d="M0 0l4 3-4 3z" fill="#fff" /></svg>
        </button>
    </aside>
);

const StatusBar = () => (
    <footer className="h-[17px] shrink-0 flex items-center border-t border-[#cfcdca] text-[9px] [&>*]:h-[13px] [&>*]:flex [&>*]:items-center [&>*]:shrink-0 [&>*+*]:border-l [&>*+*]:border-[#dddbd9]">
        <div className="w-[177px] pl-[6px] gap-[9px]">
            <svg viewBox="0 0 12 12" className="size-[12px]" fill="none" stroke="#8c8c8c"><path d="M1 1h10v10H1zM3.500 1v4h5V1M3.500 11V7.500h5V11" /></svg>
            Sheet 2 of 3
        </div>
        <div className="w-[220px] pl-[5px]">Selected: 1 row, 8 columns</div>
        <div className="w-[209px] pl-[6px]">PageStyle_Synthèse_PER</div>
        <div className="w-[167px] justify-center">English (USA)</div>
        <div className="w-[46px]" />
        <div className="w-[31px] pl-[6px]">
            <svg viewBox="0 0 20 13" className="w-[20px] h-[13px]" fill="none">
                <path d="M1 4h11v6H1z" fill="#fff" stroke={BLUE} />
                <path d="M15 1h4M17 1v11M15 12h4" stroke="#333" />
            </svg>
        </div>
        <div className="w-[20px]" />
        <div className="w-[20px]" />
        <div className="flex-1 justify-center">Average: ; Sum: 0</div>
        <div className="w-[129px] pl-[6px]">
            <button type="button" aria-label="Zoom out" className="w-[7px]"><svg viewBox="0 0 7 7" className="size-[7px]"><path d="M0 3.500h7" stroke="#222" strokeWidth="1.500" /></svg></button>
            <input
                type="range"
                aria-label="Zoom"
                defaultValue={48}
                className="w-[65px] h-[9px] mx-[3px] appearance-none bg-transparent [&::-webkit-slider-runnable-track]:h-px [&::-webkit-slider-runnable-track]:bg-[#777] [&::-webkit-slider-thumb]:appearance-none [&::-webkit-slider-thumb]:w-[3px] [&::-webkit-slider-thumb]:h-[7px] [&::-webkit-slider-thumb]:-mt-[3px] [&::-webkit-slider-thumb]:border [&::-webkit-slider-thumb]:border-[#444] [&::-webkit-slider-thumb]:bg-white"
            />
            <button type="button" aria-label="Zoom in" className="w-[7px]"><svg viewBox="0 0 7 7" className="size-[7px]"><path d="M0 3.500h7M3.500 0v7" stroke="#222" strokeWidth="1.500" /></svg></button>
            <span className="ml-auto mr-[6px]">100%</span>
        </div>
    </footer>
);

export default function App() {
    return (
        <div className="h-screen w-full flex flex-col overflow-hidden bg-[#f6f5f4] text-[#3d3d3d] text-[9px] font-['Noto_Sans',sans-serif]">
            <MenuBar />
            <StandardBar />
            <FormatBar />
            <div className="flex-1 min-h-0 flex">
                <main className="flex-1 min-w-0 flex flex-col">
                    <FormulaBar />
                    <div className="flex-1 min-h-0 flex">
                        <Sheet />
                        <div className="w-[9px] bg-[#cdcdcc] pt-px px-[2px]">
                            <div className="h-[48%] rounded-full bg-[#7f8080]" />
                        </div>
                    </div>
                    <div className="h-[10px] mr-[9px] bg-[#cdcdcc] flex items-center justify-between pl-[2px] pr-px">
                        <div className="w-[47%] h-[6px] rounded-full bg-[#7f8080]" />
                        <div className="w-[2px] h-[7px] bg-[#7f8080]" />
                    </div>
                    <TabBar />
                </main>
                <SideBar />
            </div>
            <StatusBar />
        </div>
    );
}
